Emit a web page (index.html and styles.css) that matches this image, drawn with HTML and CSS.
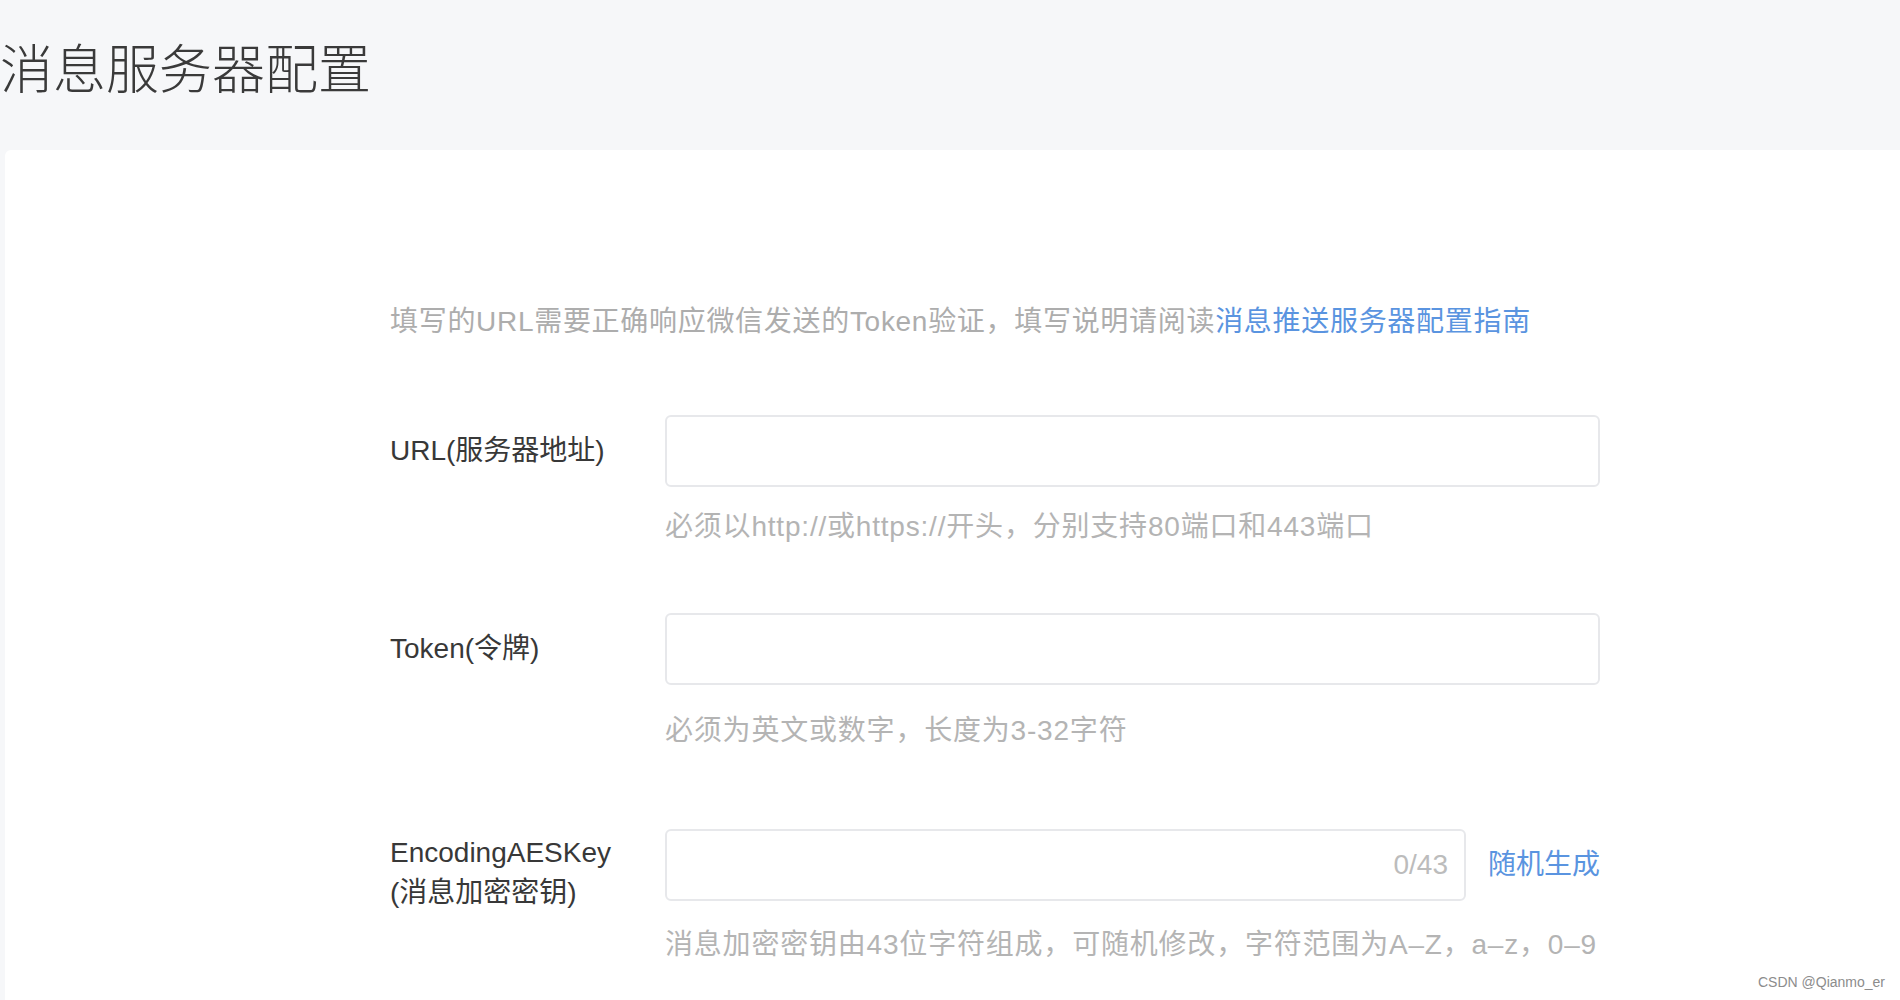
FILE: index.html
```html
<!DOCTYPE html>
<html lang="zh-CN">
<head>
<meta charset="UTF-8" />
<meta name="viewport" content="width=device-width, initial-scale=1" />
<title>消息服务器配置</title>
<link rel="stylesheet" href="styles.css">
</head>
<body>
  <div class="page-head">
    <h1>消息服务器配置</h1>
  </div>

  <div class="card">
    <p class="intro">填写的URL需要正确响应微信发送的Token验证，填写说明请阅读<a href="#" class="link">消息推送服务器配置指南</a></p>

    <div class="field">
      <div class="field-main">
        <label class="field-label" for="url">URL(服务器地址)</label>
        <input class="field-input" type="text" id="url" />
      </div>
      <p class="field-tip">必须以http://或https://开头，分别支持80端口和443端口</p>
    </div>

    <div class="field">
      <div class="field-main">
        <label class="field-label" for="token">Token(令牌)</label>
        <input class="field-input" type="text" id="token" />
      </div>
      <p class="field-tip tip-token">必须为英文或数字，长度为3-32字符</p>
    </div>

    <div class="field key-field">
      <div class="field-main">
        <label class="field-label two-line" for="aeskey">EncodingAESKey<br>(消息加密密钥)</label>
        <div class="input-box">
          <input type="text" id="aeskey" maxlength="43" />
          <span class="counter">0/43</span>
        </div>
        <a href="#" class="link gen-btn">随机生成</a>
      </div>
      <p class="field-tip tip-key">消息加密密钥由43位字符组成，可随机修改，字符范围为A–Z，a–z，0–9</p>
    </div>
  </div>

  <div class="watermark">CSDN @Qianmo_er</div>
</body>
</html>
```

FILE: styles.css
```css
html, body {
  margin: 0;
  height: 100%;
  overflow: hidden;
}
body {
  background-color: #f6f7f9;
  font-family: "Liberation Sans", "Noto Sans CJK SC", sans-serif;
  color: #353535;
}
.page-head {
  height: 150px;
  box-sizing: border-box;
  padding-top: 40px;
}
.page-head h1 {
  margin: 0;
  font-size: 53px;
  line-height: 62px;
  font-weight: 300;
  color: #3a3a3a;
}
.card {
  margin-left: 5px;
  background: #fff;
  border-top-left-radius: 6px;
  min-height: calc(100vh - 150px);
  box-sizing: border-box;
  padding: 152px 0 0 385px;
}
.intro {
  margin: 0 0 73px;
  font-size: 28px;
  line-height: 40px;
  letter-spacing: 0.7px;
  color: #adadad;
}
.link {
  color: #5a94e0;
  text-decoration: none;
}
.field {
  width: 1210px;
  margin-bottom: 66px;
}
.key-field {
  margin-top: 2px;
}
.field-main {
  display: flex;
  align-items: center;
}
.field-label {
  width: 275px;
  flex-shrink: 0;
  font-size: 28px;
  line-height: 40px;
  color: #383838;
}
.field-label.two-line {
  align-self: flex-start;
  margin-top: 16px;
  line-height: 40px;
}
.field-input,
.input-box {
  flex: 1;
  height: 72px;
  box-sizing: border-box;
  border: 2px solid #e7e8eb;
  border-radius: 6px;
  background: #fff;
  font-size: 28px;
  outline: none;
  padding: 0 16px;
}
.input-box {
  display: flex;
  align-items: center;
}
.input-box input {
  flex: 1;
  min-width: 0;
  border: none;
  outline: none;
  font-size: 28px;
  background: transparent;
  padding: 0;
}
.counter {
  font-size: 28px;
  color: #bcbcbc;
}
.gen-btn {
  margin-left: 22px;
  font-size: 28px;
  line-height: 40px;
  white-space: nowrap;
}
.field-tip {
  margin: 20px 0 0 275px;
  font-size: 28px;
  line-height: 40px;
  letter-spacing: 0.8px;
  white-space: nowrap;
  color: #b4b4b4;
}
.tip-token {
  margin-top: 26px;
}
.tip-key {
  margin-top: 12px;
}
.watermark {
  position: absolute;
  right: 15px;
  bottom: 10px;
  font-size: 14px;
  color: #8c8c8c;
}
```
